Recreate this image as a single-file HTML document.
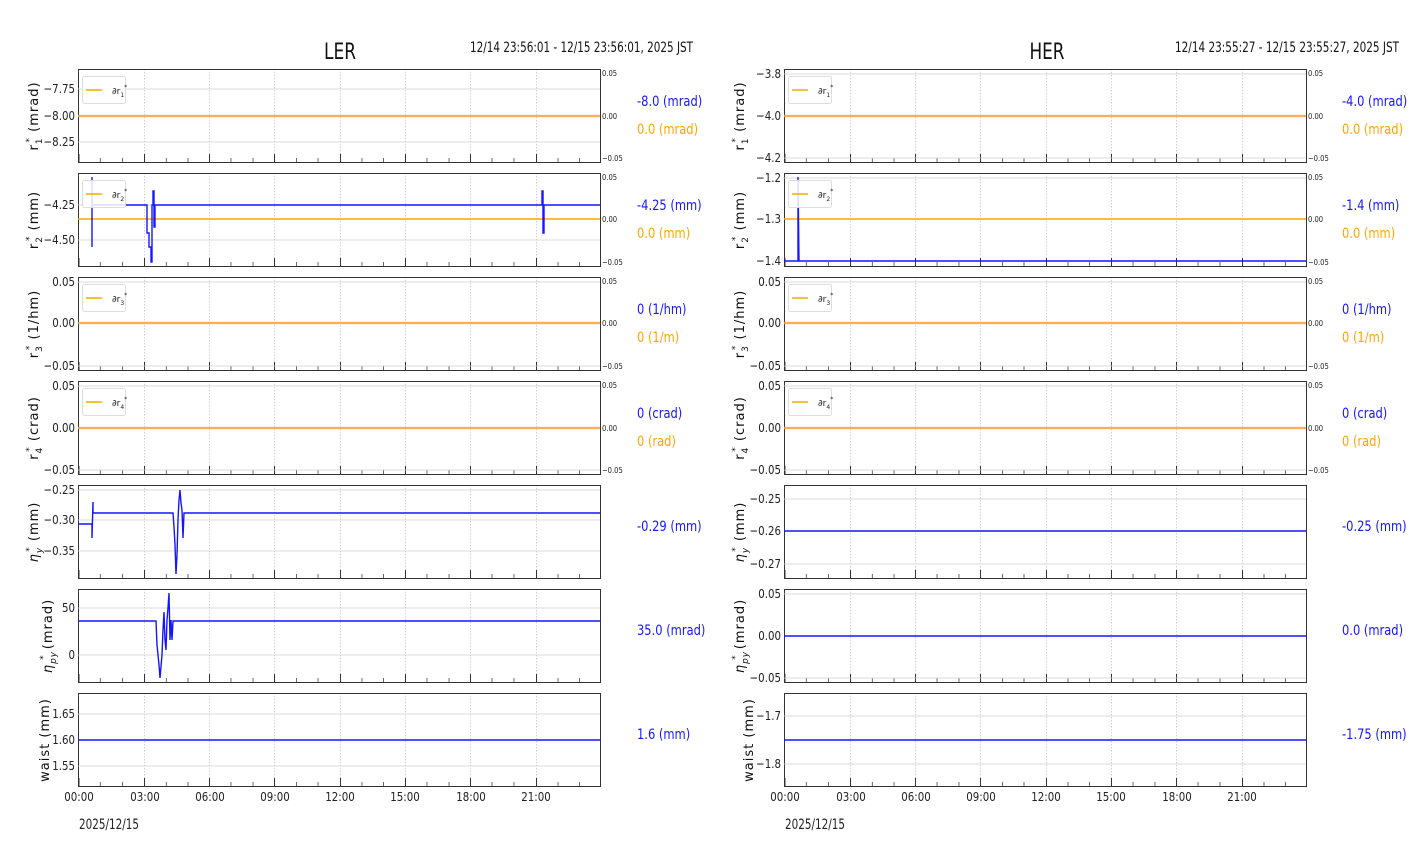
<!DOCTYPE html>
<html><head><meta charset="utf-8"><style>
html,body{margin:0;padding:0;background:#fff;}
svg{display:block;font-family:"DejaVu Sans","Liberation Sans",sans-serif;}
.tl{font-size:12.5px;fill:#222;}
.sm{font-size:8px;fill:#222;}
.yl{font-size:13px;fill:#111;font-family:"DejaVu Sans",sans-serif;}
.b{font-size:14px;fill:#1515ff;}
.o{font-size:14px;fill:#ffa500;}
.g{stroke:#d0d0d0;stroke-width:0.8;}
</style></head><body>
<svg width="1412" height="864" viewBox="0 0 1412 864" xmlns="http://www.w3.org/2000/svg">
<defs>
<g id="f">
 <g stroke="#c8c8c8" stroke-width="0.8" stroke-dasharray="1.5,1.5">
  <line x1="66.5" y1="0" x2="66.5" y2="93"/><line x1="131.5" y1="0" x2="131.5" y2="93"/>
  <line x1="196.5" y1="0" x2="196.5" y2="93"/><line x1="262.5" y1="0" x2="262.5" y2="93"/>
  <line x1="327.5" y1="0" x2="327.5" y2="93"/><line x1="392.5" y1="0" x2="392.5" y2="93"/>
  <line x1="458.5" y1="0" x2="458.5" y2="93"/>
 </g>
 <path stroke="#444" stroke-width="0.8" fill="none" d="M22.3 93v-4M44.5 93v-4M88.3 93v-4M110 93v-4M153 93v-4M175 93v-4M218.5 93v-4M240 93v-4M284 93v-4M305.5 93v-4M349 93v-4M371 93v-4M414 93v-4M436 93v-4M480 93v-4M501.5 93v-4"/>
 <path stroke="#333" stroke-width="1" fill="none" d="M1 93v-8M66.5 93v-8M131.5 93v-8M196.5 93v-8M262.5 93v-8M327.5 93v-8M392.5 93v-8M458.5 93v-8"/>
 <rect x="0.5" y="0.5" width="522" height="93" fill="none" stroke="#333" stroke-width="1"/>
</g>
<g id="lg">
 <rect x="0.5" y="0.5" width="43" height="27" rx="2" fill="#fff" fill-opacity="0.85" stroke="#ddd"/>
 <line x1="4" y1="14" x2="20" y2="14" stroke="#ffa500" stroke-width="1.5"/>
</g>
</defs>

<!-- Titles -->
<text x="340" y="59" font-size="22" text-anchor="middle" fill="#111" textLength="32" lengthAdjust="spacingAndGlyphs">LER</text>
<text x="470" y="52" font-size="14" fill="#111" textLength="223" lengthAdjust="spacingAndGlyphs">12/14 23:56:01 - 12/15 23:56:01, 2025 JST</text>
<text x="1047" y="59" font-size="22" text-anchor="middle" fill="#111" textLength="35" lengthAdjust="spacingAndGlyphs">HER</text>
<text x="1175" y="52" font-size="14" fill="#111" textLength="224" lengthAdjust="spacingAndGlyphs">12/14 23:55:27 - 12/15 23:55:27, 2025 JST</text>

<!-- ===== LER frames & data ===== -->
<g transform="translate(78,69)"><use href="#f"/></g>
<path class="g" d="M78 89H600M78 116H600M78 142H600"/>
<line x1="78" y1="116" x2="600" y2="116" stroke="#f0a080" stroke-width="2.5" opacity="0.7"/>
<line x1="78" y1="116" x2="600" y2="116" stroke="#ffa500" stroke-width="1"/>
<g transform="translate(82,76)"><use href="#lg"/></g><text x="112" y="94" font-size="9" fill="#222">∂r<tspan dy="3" font-size="6">1</tspan><tspan dy="-8" font-size="6">*</tspan></text>

<g transform="translate(78,173)"><use href="#f"/></g>
<path class="g" d="M78 205H600M78 240H600"/>
<line x1="78" y1="219" x2="600" y2="219" stroke="#ffa500" stroke-width="1.5"/>
<polyline fill="none" stroke="#1515ff" stroke-width="1.4" points="92,247 92,177 92,205 147,205 147,233 149,233 149,247 151,247 151,262 152,262 152,205 153,205 153,191 154,191 154,227 155,227 155,205 542,205 542,191 543,191 543,233 544,233 544,205 600,205"/>
<g transform="translate(82,180)"><use href="#lg"/></g><text x="112" y="198" font-size="9" fill="#222">∂r<tspan dy="3" font-size="6">2</tspan><tspan dy="-8" font-size="6">*</tspan></text>

<g transform="translate(78,277)"><use href="#f"/></g>
<path class="g" d="M78 282H600M78 323H600M78 366H600"/>
<line x1="78" y1="323" x2="600" y2="323" stroke="#f0a080" stroke-width="2.5" opacity="0.7"/>
<line x1="78" y1="323" x2="600" y2="323" stroke="#ffa500" stroke-width="1"/>
<g transform="translate(82,284)"><use href="#lg"/></g><text x="112" y="302" font-size="9" fill="#222">∂r<tspan dy="3" font-size="6">3</tspan><tspan dy="-8" font-size="6">*</tspan></text>

<g transform="translate(78,381)"><use href="#f"/></g>
<path class="g" d="M78 386H600M78 428H600M78 470H600"/>
<line x1="78" y1="428" x2="600" y2="428" stroke="#f0a080" stroke-width="2.5" opacity="0.7"/>
<line x1="78" y1="428" x2="600" y2="428" stroke="#ffa500" stroke-width="1"/>
<g transform="translate(82,388)"><use href="#lg"/></g><text x="112" y="406" font-size="9" fill="#222">∂r<tspan dy="3" font-size="6">4</tspan><tspan dy="-8" font-size="6">*</tspan></text>

<g transform="translate(78,485)"><use href="#f"/></g>
<path class="g" d="M78 490H600M78 520H600M78 551H600"/>
<polyline fill="none" stroke="#1515ff" stroke-width="1.4" points="78,524 92,524 92,538 93,502 93,513 173,513 174,527 175,545 176,574 177,555 178,520 179,500 180,490 181,503 182,510 183,538 184,513 600,513"/>

<g transform="translate(78,589)"><use href="#f"/></g>
<path class="g" d="M78 608H600M78 655H600"/>
<polyline fill="none" stroke="#1515ff" stroke-width="1.4" points="78,621 156,621 157,645 159,665 160,678 162,655 163,630 164,612 165,640 166,650 167,620 168,608 169,593 170,640 171,620 172,640 173,621 600,621"/>

<g transform="translate(78,693)"><use href="#f"/></g>
<path class="g" d="M78 714H600M78 740H600M78 766H600"/>
<line x1="78" y1="740" x2="600" y2="740" stroke="#1515ff" stroke-width="1.6"/>

<!-- LER left tick labels (condensed) -->
<g class="tl" text-anchor="end" transform="translate(75,0) scale(0.82,1)">
<text x="0" y="93">−7.75</text><text x="0" y="120">−8.00</text><text x="0" y="146">−8.25</text>
<text x="0" y="209">−4.25</text><text x="0" y="244">−4.50</text>
<text x="0" y="286">0.05</text><text x="0" y="327">0.00</text><text x="0" y="370">−0.05</text>
<text x="0" y="390">0.05</text><text x="0" y="432">0.00</text><text x="0" y="474">−0.05</text>
<text x="0" y="494">−0.25</text><text x="0" y="524">−0.30</text><text x="0" y="555">−0.35</text>
<text x="0" y="612">50</text><text x="0" y="659">0</text>
<text x="0" y="718">1.65</text><text x="0" y="744">1.60</text><text x="0" y="770">1.55</text>
</g>
<g class="sm" transform="translate(602,0) scale(0.85,1)">
<text x="0" y="76">0.05</text><text x="0" y="119">0.00</text><text x="0" y="161">−0.05</text>
<text x="0" y="180">0.05</text><text x="0" y="222">0.00</text><text x="0" y="265">−0.05</text>
<text x="0" y="284">0.05</text><text x="0" y="326">0.00</text><text x="0" y="369">−0.05</text>
<text x="0" y="388">0.05</text><text x="0" y="431">0.00</text><text x="0" y="473">−0.05</text>
</g>
<g transform="translate(637,0) scale(0.82,1)">
<text class="b" x="0" y="106">-8.0 (mrad)</text><text class="o" x="0" y="134">0.0 (mrad)</text>
<text class="b" x="0" y="210">-4.25 (mm)</text><text class="o" x="0" y="238">0.0 (mm)</text>
<text class="b" x="0" y="314">0 (1/hm)</text><text class="o" x="0" y="342">0 (1/m)</text>
<text class="b" x="0" y="418">0 (crad)</text><text class="o" x="0" y="446">0 (rad)</text>
<text class="b" x="0" y="531">-0.29 (mm)</text>
<text class="b" x="0" y="635">35.0 (mrad)</text>
<text class="b" x="0" y="739">1.6 (mm)</text>
</g>

<text class="yl" transform="translate(38,116) rotate(-90)" text-anchor="middle" letter-spacing="1">r<tspan dy="4" font-size="9">1</tspan><tspan dy="-10" font-size="9" dx="-5">*</tspan><tspan dy="6"> (mrad)</tspan></text>
<text class="yl" transform="translate(38,220) rotate(-90)" text-anchor="middle" letter-spacing="1">r<tspan dy="4" font-size="9">2</tspan><tspan dy="-10" font-size="9" dx="-5">*</tspan><tspan dy="6"> (mm)</tspan></text>
<text class="yl" transform="translate(38,324) rotate(-90)" text-anchor="middle" letter-spacing="1">r<tspan dy="4" font-size="9">3</tspan><tspan dy="-10" font-size="9" dx="-5">*</tspan><tspan dy="6"> (1/hm)</tspan></text>
<text class="yl" transform="translate(38,428) rotate(-90)" text-anchor="middle" letter-spacing="1">r<tspan dy="4" font-size="9">4</tspan><tspan dy="-10" font-size="9" dx="-5">*</tspan><tspan dy="6"> (crad)</tspan></text>
<text class="yl" transform="translate(38,532) rotate(-90)" text-anchor="middle" letter-spacing="1" font-style="italic">η<tspan dy="4" font-size="9">y</tspan><tspan dy="-10" font-size="9" dx="-5">*</tspan><tspan dy="6" font-style="normal"> (mm)</tspan></text>
<text class="yl" transform="translate(52,636) rotate(-90)" text-anchor="middle" letter-spacing="1" font-style="italic">η<tspan dy="4" font-size="9">py</tspan><tspan dy="-10" font-size="9" dx="-9">*</tspan><tspan dy="6" font-style="normal"> (mrad)</tspan></text>
<text class="yl" transform="translate(49,740) rotate(-90)" text-anchor="middle" letter-spacing="1">waist (mm)</text>

<g class="tl" text-anchor="middle">
<g transform="translate(79,801) scale(0.82,1)"><text>00:00</text></g>
<g transform="translate(145,801) scale(0.82,1)"><text>03:00</text></g>
<g transform="translate(210,801) scale(0.82,1)"><text>06:00</text></g>
<g transform="translate(275,801) scale(0.82,1)"><text>09:00</text></g>
<g transform="translate(340,801) scale(0.82,1)"><text>12:00</text></g>
<g transform="translate(405,801) scale(0.82,1)"><text>15:00</text></g>
<g transform="translate(471,801) scale(0.82,1)"><text>18:00</text></g>
<g transform="translate(536,801) scale(0.82,1)"><text>21:00</text></g>
</g>
<text x="79" y="829" font-size="14.5" fill="#222" textLength="60" lengthAdjust="spacingAndGlyphs">2025/12/15</text>

<!-- ===== HER ===== -->
<g transform="translate(784,69)"><use href="#f"/></g>
<path class="g" d="M784 74H1306M784 116H1306M784 158H1306"/>
<line x1="784" y1="116" x2="1306" y2="116" stroke="#f0a080" stroke-width="2.5" opacity="0.7"/>
<line x1="784" y1="116" x2="1306" y2="116" stroke="#ffa500" stroke-width="1"/>
<g transform="translate(788,76)"><use href="#lg"/></g><text x="818" y="94" font-size="9" fill="#222">∂r<tspan dy="3" font-size="6">1</tspan><tspan dy="-8" font-size="6">*</tspan></text>

<g transform="translate(784,173)"><use href="#f"/></g>
<path class="g" d="M784 178H1306M784 219H1306M784 261H1306"/>
<line x1="784" y1="219" x2="1306" y2="219" stroke="#ffa500" stroke-width="1.5"/>
<polyline fill="none" stroke="#1515ff" stroke-width="1.4" points="784,261 798,261 798,177 799,261 1306,261"/>
<g transform="translate(788,180)"><use href="#lg"/></g><text x="818" y="198" font-size="9" fill="#222">∂r<tspan dy="3" font-size="6">2</tspan><tspan dy="-8" font-size="6">*</tspan></text>

<g transform="translate(784,277)"><use href="#f"/></g>
<path class="g" d="M784 282H1306M784 323H1306M784 366H1306"/>
<line x1="784" y1="323" x2="1306" y2="323" stroke="#f0a080" stroke-width="2.5" opacity="0.7"/>
<line x1="784" y1="323" x2="1306" y2="323" stroke="#ffa500" stroke-width="1"/>
<g transform="translate(788,284)"><use href="#lg"/></g><text x="818" y="302" font-size="9" fill="#222">∂r<tspan dy="3" font-size="6">3</tspan><tspan dy="-8" font-size="6">*</tspan></text>

<g transform="translate(784,381)"><use href="#f"/></g>
<path class="g" d="M784 386H1306M784 428H1306M784 470H1306"/>
<line x1="784" y1="428" x2="1306" y2="428" stroke="#f0a080" stroke-width="2.5" opacity="0.7"/>
<line x1="784" y1="428" x2="1306" y2="428" stroke="#ffa500" stroke-width="1"/>
<g transform="translate(788,388)"><use href="#lg"/></g><text x="818" y="406" font-size="9" fill="#222">∂r<tspan dy="3" font-size="6">4</tspan><tspan dy="-8" font-size="6">*</tspan></text>

<g transform="translate(784,485)"><use href="#f"/></g>
<path class="g" d="M784 499H1306M784 531H1306M784 564H1306"/>
<line x1="784" y1="531" x2="1306" y2="531" stroke="#1515ff" stroke-width="1.6"/>

<g transform="translate(784,589)"><use href="#f"/></g>
<path class="g" d="M784 594H1306M784 636H1306M784 678H1306"/>
<line x1="784" y1="636" x2="1306" y2="636" stroke="#1515ff" stroke-width="1.6"/>

<g transform="translate(784,693)"><use href="#f"/></g>
<path class="g" d="M784 716H1306M784 764H1306"/>
<line x1="784" y1="740" x2="1306" y2="740" stroke="#1515ff" stroke-width="1.6"/>

<g class="tl" text-anchor="end" transform="translate(781,0) scale(0.82,1)">
<text x="0" y="78">−3.8</text><text x="0" y="120">−4.0</text><text x="0" y="162">−4.2</text>
<text x="0" y="182">−1.2</text><text x="0" y="223">−1.3</text><text x="0" y="265">−1.4</text>
<text x="0" y="286">0.05</text><text x="0" y="327">0.00</text><text x="0" y="370">−0.05</text>
<text x="0" y="390">0.05</text><text x="0" y="432">0.00</text><text x="0" y="474">−0.05</text>
<text x="0" y="503">−0.25</text><text x="0" y="535">−0.26</text><text x="0" y="568">−0.27</text>
<text x="0" y="598">0.05</text><text x="0" y="640">0.00</text><text x="0" y="682">−0.05</text>
<text x="0" y="720">−1.7</text><text x="0" y="768">−1.8</text>
</g>
<g class="sm" transform="translate(1308,0) scale(0.85,1)">
<text x="0" y="76">0.05</text><text x="0" y="119">0.00</text><text x="0" y="161">−0.05</text>
<text x="0" y="180">0.05</text><text x="0" y="222">0.00</text><text x="0" y="265">−0.05</text>
<text x="0" y="284">0.05</text><text x="0" y="326">0.00</text><text x="0" y="369">−0.05</text>
<text x="0" y="388">0.05</text><text x="0" y="431">0.00</text><text x="0" y="473">−0.05</text>
</g>
<g transform="translate(1342,0) scale(0.82,1)">
<text class="b" x="0" y="106">-4.0 (mrad)</text><text class="o" x="0" y="134">0.0 (mrad)</text>
<text class="b" x="0" y="210">-1.4 (mm)</text><text class="o" x="0" y="238">0.0 (mm)</text>
<text class="b" x="0" y="314">0 (1/hm)</text><text class="o" x="0" y="342">0 (1/m)</text>
<text class="b" x="0" y="418">0 (crad)</text><text class="o" x="0" y="446">0 (rad)</text>
<text class="b" x="0" y="531">-0.25 (mm)</text>
<text class="b" x="0" y="635">0.0 (mrad)</text>
<text class="b" x="0" y="739">-1.75 (mm)</text>
</g>

<text class="yl" transform="translate(744,116) rotate(-90)" text-anchor="middle" letter-spacing="1">r<tspan dy="4" font-size="9">1</tspan><tspan dy="-10" font-size="9" dx="-5">*</tspan><tspan dy="6"> (mrad)</tspan></text>
<text class="yl" transform="translate(744,220) rotate(-90)" text-anchor="middle" letter-spacing="1">r<tspan dy="4" font-size="9">2</tspan><tspan dy="-10" font-size="9" dx="-5">*</tspan><tspan dy="6"> (mm)</tspan></text>
<text class="yl" transform="translate(744,324) rotate(-90)" text-anchor="middle" letter-spacing="1">r<tspan dy="4" font-size="9">3</tspan><tspan dy="-10" font-size="9" dx="-5">*</tspan><tspan dy="6"> (1/hm)</tspan></text>
<text class="yl" transform="translate(744,428) rotate(-90)" text-anchor="middle" letter-spacing="1">r<tspan dy="4" font-size="9">4</tspan><tspan dy="-10" font-size="9" dx="-5">*</tspan><tspan dy="6"> (crad)</tspan></text>
<text class="yl" transform="translate(744,532) rotate(-90)" text-anchor="middle" letter-spacing="1" font-style="italic">η<tspan dy="4" font-size="9">y</tspan><tspan dy="-10" font-size="9" dx="-5">*</tspan><tspan dy="6" font-style="normal"> (mm)</tspan></text>
<text class="yl" transform="translate(744,636) rotate(-90)" text-anchor="middle" letter-spacing="1" font-style="italic">η<tspan dy="4" font-size="9">py</tspan><tspan dy="-10" font-size="9" dx="-9">*</tspan><tspan dy="6" font-style="normal"> (mrad)</tspan></text>
<text class="yl" transform="translate(753,740) rotate(-90)" text-anchor="middle" letter-spacing="1">waist (mm)</text>

<g class="tl" text-anchor="middle">
<g transform="translate(785,801) scale(0.82,1)"><text>00:00</text></g>
<g transform="translate(851,801) scale(0.82,1)"><text>03:00</text></g>
<g transform="translate(916,801) scale(0.82,1)"><text>06:00</text></g>
<g transform="translate(981,801) scale(0.82,1)"><text>09:00</text></g>
<g transform="translate(1046,801) scale(0.82,1)"><text>12:00</text></g>
<g transform="translate(1111,801) scale(0.82,1)"><text>15:00</text></g>
<g transform="translate(1177,801) scale(0.82,1)"><text>18:00</text></g>
<g transform="translate(1242,801) scale(0.82,1)"><text>21:00</text></g>
</g>
<text x="785" y="829" font-size="14.5" fill="#222" textLength="60" lengthAdjust="spacingAndGlyphs">2025/12/15</text>
</svg>
</body></html>
